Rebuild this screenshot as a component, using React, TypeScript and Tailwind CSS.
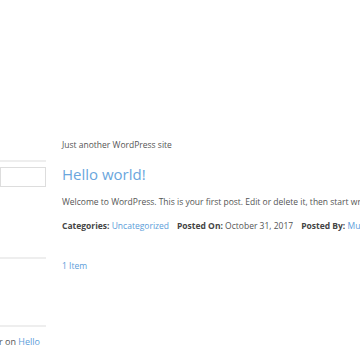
export default function App() {
  return (
    <div className="relative w-[360px] h-[360px] overflow-hidden bg-white font-['Open_Sans',sans-serif] text-[#555]">
      <div className="flex pt-[140px]">
        {/* sidebar, clipped on the left */}
        <div className="w-[46px] shrink-0 flex flex-col">
          <div className="h-[20px]" />
          <div className="border-t-2 border-[#eee]" />
          <div className="mt-[5px] h-[20px] border border-[#ddd]" />
          <div className="h-[70px]" />
          <div className="border-t-2 border-[#eee]" />
          <div className="h-[66px]" />
          <div className="border-t-2 border-[#eee]" />
          <div className="mt-[8px] pr-[6px] text-[9px] whitespace-nowrap flex justify-end">
            <span>er on <span className="text-[#5b9dd9]">Hello</span></span>
          </div>
        </div>
        <div className="ml-[16px] flex-1 min-w-0 whitespace-nowrap">
          <p className="text-[8.5px] leading-[10px]">Just another WordPress site</p>
          <h2 className="mt-[12px] text-[15px] font-normal leading-[24px] text-[#6aa6dd]">Hello world!</h2>
          <p className="mt-[10px] text-[8.5px] leading-[12px]">
            Welcome to WordPress. This is your first post. Edit or delete it, then start writing!
          </p>
          <div className="mt-[12px] text-[8.5px] leading-[12px] flex gap-[8px]">
            <span><b className="font-bold text-[#444]">Categories:</b> <span className="text-[#5b9dd9]">Uncategorized</span></span>
            <span><b className="font-bold text-[#444]">Posted On:</b> October 31, 2017</span>
            <span><b className="font-bold text-[#444]">Posted By:</b> <span className="text-[#5b9dd9]">Mustafa</span></span>
          </div>
          <p className="mt-[28px] text-[8.5px] leading-[12px] text-[#5b9dd9]">1 Item</p>
        </div>
      </div>
    </div>
  );
}
